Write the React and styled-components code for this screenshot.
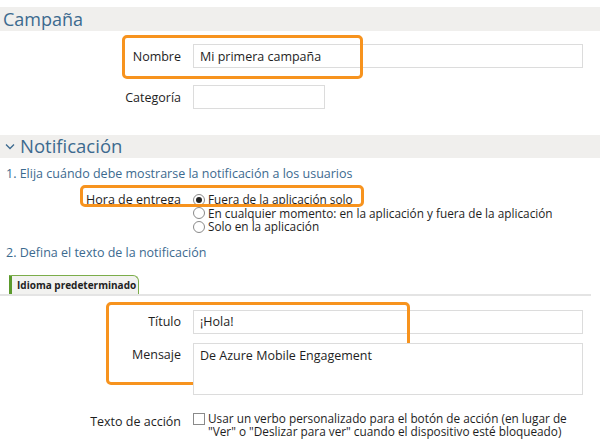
import React from 'react'
import styled, { createGlobalStyle } from 'styled-components'

const Global = createGlobalStyle`
  html, body { margin: 0; padding: 0; background: #fff; }
  body { font-family: "Open Sans", "Noto Sans", sans-serif; color: #1e1e1e; }
  * { box-sizing: border-box; }
`

const Page = styled.div`
  width: 600px;
  height: 445px;
  overflow: hidden;
  padding-top: 7px;
`

const Band = styled.div`
  display: flex;
  align-items: center;
  gap: 5px;
  height: ${({ big }) => (big ? '23px' : '24px')};
  background: #f0efed;
  color: #3c6a8f;
  font-size: ${({ big }) => (big ? '18.5px' : '18px')};
  padding-left: ${({ big }) => (big ? 5 : 3)}px;
  margin-top: ${({ mt }) => mt || 0}px;
  line-height: 1;
`

const Row = styled.div`
  position: relative;
  display: grid;
  grid-template-columns: 181px 390px;
  column-gap: 12px;
  align-items: ${({ top }) => (top ? 'start' : 'center')};
  margin-top: ${({ mt }) => mt || 0}px;
`

const Label = styled.div`
  text-align: right;
  font-size: 12.5px;
  line-height: ${({ lh }) => lh || 'normal'};
  padding-top: ${({ pt }) => pt || 0}px;
`

const Input = styled.div`
  height: ${({ h }) => h || 24}px;
  width: ${({ w }) => w || 390}px;
  border: 1px solid #dcdcdc;
  font-size: 12.5px;
  padding: ${({ multi }) => (multi ? '3px 6px' : '0 6px')};
  display: flex;
  align-items: ${({ multi }) => (multi ? 'flex-start' : 'center')};
  background: #fff;
`

const Highlight = styled.div`
  position: absolute;
  left: ${({ x }) => x}px;
  top: ${({ y }) => y}px;
  width: ${({ w }) => w}px;
  height: ${({ h }) => h}px;
  border: 3px solid #f7931e;
  border-radius: 5px;
  pointer-events: none;
`

const Step = styled.div`
  color: #3c6a8f;
  font-size: 12.5px;
  padding-left: 6px;
  margin-top: ${({ mt }) => mt || 0}px;
`

const Options = styled.div`
  display: flex;
  flex-direction: column;
`

const Option = styled.label`
  display: flex;
  align-items: center;
  gap: 3px;
  font-size: 11.8px;
  line-height: 13.5px;
  white-space: nowrap;
`

const Radio = styled.span`
  width: 12px;
  height: 12px;
  border-radius: 50%;
  border: 1px solid #8a8a8a;
  display: inline-flex;
  align-items: center;
  justify-content: center;
  background: #fff;
  flex: none;
  &::after {
    content: '';
    width: 6px;
    height: 6px;
    border-radius: 50%;
    background: ${({ on }) => (on ? '#222' : 'transparent')};
  }
`

const TabBar = styled.div`
  margin-top: 14px;
  width: 591px;
  border-bottom: 2px solid #e4e4e4;
  padding-left: 9px;
  display: flex;
`

const Tab = styled.div`
  height: 19px;
  width: 130px;
  padding: 0 0 0 5px;
  display: flex;
  align-items: center;
  background: #f2f2f0;
  border-top: 1px solid #7cad4a;
  border-right: 1px solid #7cad4a;
  border-left: 3px solid #5b9a2c;
  border-top-right-radius: 6px;
  font-size: 10px;
  font-weight: 700;
  color: #222;
  white-space: nowrap;
`

const CheckRow = styled.div`
  display: flex;
  align-items: flex-start;
  gap: 3px;
  font-size: 11.8px;
  line-height: 13.5px;
  white-space: nowrap;
`

const Check = styled.span`
  width: 12px;
  height: 12px;
  border: 1px solid #8a8a8a;
  margin-top: 1px;
  flex: none;
`

const Chevron = () => (
  <svg width="10" height="7" viewBox="0 0 10 7">
    <polyline points="1,1.5 5,5.5 9,1.5" fill="none" stroke="#3c6a8f" strokeWidth="1.3" />
  </svg>
)

export default function App() {
  return (
    <>
      <Global />
      <Page>
        <Band>Campaña</Band>

        <Row mt={13}>
          <Label>Nombre</Label>
          <Input>Mi primera campaña</Input>
          <Highlight x={122} y={-9} w={241} h={44} />
        </Row>
        <Row mt={17}>
          <Label>Categoría</Label>
          <Input w={132} />
        </Row>

        <Band big mt={26}>
          <Chevron />
          Notificación
        </Band>
        <Step mt={7}>1. Elija cuándo debe mostrarse la notificación a los usuarios</Step>

        <Row top mt={11}>
          <Label lh="13.5px">Hora de entrega</Label>
          <Options>
            <Option><Radio on />Fuera de la aplicación solo</Option>
            <Option><Radio />En cualquier momento: en la aplicación y fuera de la aplicación</Option>
            <Option><Radio />Solo en la aplicación</Option>
          </Options>
          <Highlight x={80} y={-8} w={284} h={22} />
        </Row>

        <Step mt={10}>2. Defina el texto de la notificación</Step>

        <TabBar>
          <Tab>Idioma predeterminado</Tab>
        </TabBar>

        <Row mt={14}>
          <Label>Título</Label>
          <Input>¡Hola!</Input>
          <Highlight x={106} y={-8} w={304} h={83} />
        </Row>
        <Row top mt={9}>
          <Label pt={3}>Mensaje</Label>
          <Input multi h={52}>De Azure Mobile Engagement</Input>
        </Row>

        <Row top mt={17}>
          <Label pt={1}>Texto de acción</Label>
          <CheckRow>
            <Check />
            <span>
              Usar un verbo personalizado para el botón de acción (en lugar de
              <br />
              "Ver" o "Deslizar para ver" cuando el dispositivo esté bloqueado)
            </span>
          </CheckRow>
        </Row>
      </Page>
    </>
  )
}
